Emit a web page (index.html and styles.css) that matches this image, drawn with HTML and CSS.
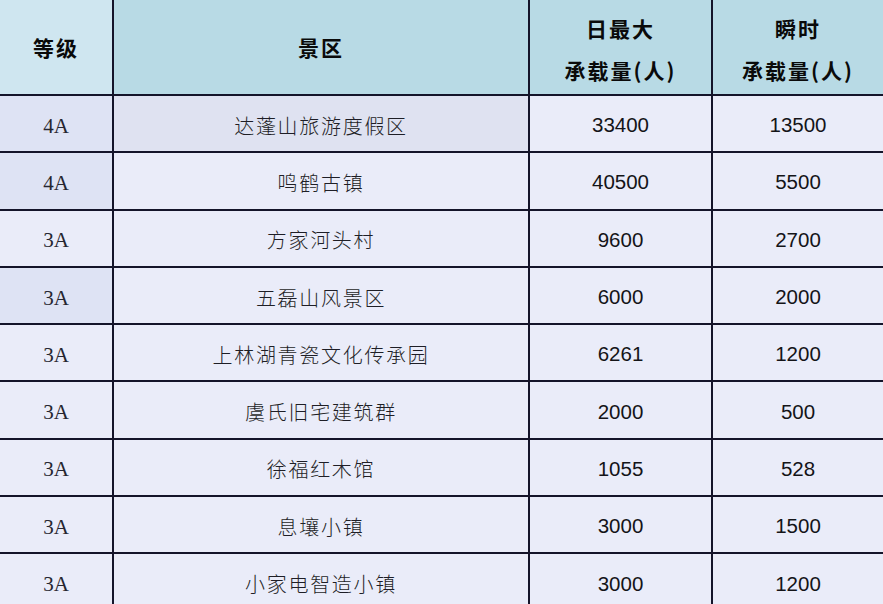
FILE: index.html
```html
<!DOCTYPE html>
<html lang="zh-CN">
<head>
<meta charset="utf-8">
<title>景区承载量</title>
<link rel="stylesheet" href="styles.css">
</head>
<body>
<div class="table">
  <div class="cell head head-first"><span class="ht">等级</span></div>
  <div class="cell head"><span class="ht">景区</span></div>
  <div class="cell head two"><span class="ht">日最大</span><span class="ht">承载量(人)</span></div>
  <div class="cell head two"><span class="ht">瞬时</span><span class="ht">承载量(人)</span></div>

  <div class="cell lvl tint">4A</div>
  <div class="cell name tint2">达蓬山旅游度假区</div>
  <div class="cell num">33400</div>
  <div class="cell num">13500</div>

  <div class="cell lvl tint">4A</div>
  <div class="cell name">鸣鹤古镇</div>
  <div class="cell num">40500</div>
  <div class="cell num">5500</div>

  <div class="cell lvl">3A</div>
  <div class="cell name">方家河头村</div>
  <div class="cell num">9600</div>
  <div class="cell num">2700</div>

  <div class="cell lvl tint">3A</div>
  <div class="cell name">五磊山风景区</div>
  <div class="cell num">6000</div>
  <div class="cell num">2000</div>

  <div class="cell lvl">3A</div>
  <div class="cell name">上林湖青瓷文化传承园</div>
  <div class="cell num">6261</div>
  <div class="cell num">1200</div>

  <div class="cell lvl">3A</div>
  <div class="cell name">虞氏旧宅建筑群</div>
  <div class="cell num">2000</div>
  <div class="cell num">500</div>

  <div class="cell lvl">3A</div>
  <div class="cell name">徐福红木馆</div>
  <div class="cell num">1055</div>
  <div class="cell num">528</div>

  <div class="cell lvl">3A</div>
  <div class="cell name">息壤小镇</div>
  <div class="cell num">3000</div>
  <div class="cell num">1500</div>

  <div class="cell lvl">3A</div>
  <div class="cell name">小家电智造小镇</div>
  <div class="cell num">3000</div>
  <div class="cell num">1200</div>
</div>
</body>
</html>
```
FILE: styles.css
```css
html, body {
  margin: 0;
  padding: 0;
  height: 604px;
  overflow: hidden;
  background: #e9ebf8;
}

.table {
  display: grid;
  grid-template-columns: 112px 414px 181px 170px;
  grid-template-rows: 94px repeat(9, 55.3px);
  column-gap: 2px;
  row-gap: 2px;
  background: #14142a;
  width: 883px;
}

.cell {
  display: flex;
  align-items: center;
  justify-content: center;
  background: #eaecf9;
  color: #262630;
}

.head {
  background: #b8dae5;
  flex-direction: column;
  color: #0a0a0a;
}

.head-first {
  background: #cfe6f0;
}

.ht {
  font-family: "Noto Sans CJK SC", sans-serif;
  font-weight: 700;
  font-size: 21px;
  letter-spacing: 2px;
  line-height: 1;
}

.two {
  gap: 21px;
  padding-top: 4px;
}

.lvl {
  font-family: "Liberation Serif", serif;
  font-size: 21px;
  padding-top: 5px;
}

.lvl-text {
  display: inline-block;
}

.name {
  font-family: "Noto Sans CJK SC", sans-serif;
  font-weight: 300;
  font-size: 20px;
  letter-spacing: 1.7px;
  padding-top: 3px;
  color: #1e1e26;
}

.num {
  font-family: "Liberation Sans", Arial, sans-serif;
  font-size: 20.5px;
  padding-top: 3px;
  color: #141418;
}

.tint {
  background: #dee3f4;
}

.tint2 {
  background: #dfe2f1;
}
```
